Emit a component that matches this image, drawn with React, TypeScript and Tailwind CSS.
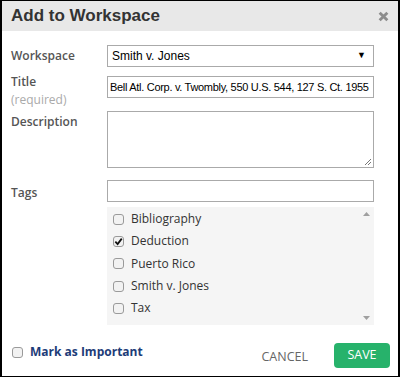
const tags = [
  { name: "Bibliography", checked: false },
  { name: "Deduction", checked: true },
  { name: "Puerto Rico", checked: false },
  { name: "Smith v. Jones", checked: false },
  { name: "Tax", checked: false },
];

const Box = ({ checked }: { checked?: boolean }) => (
  <span className="flex h-[11px] w-[11px] items-center justify-center rounded-[3px] border border-[#9a9a9a] bg-[#f2f2f2]">
    {checked && (
      <svg width="9" height="9" viewBox="0 0 10 10">
        <path d="M1.5 5.2 L4 7.8 L8.6 1.8" fill="none" stroke="#111" strokeWidth="2" />
      </svg>
    )}
  </span>
);

const Label = ({ children }: { children: React.ReactNode }) => (
  <div className="w-[96px] shrink-0 text-[12px] font-semibold text-[#555]">{children}</div>
);

export default function App() {
  return (
    <div className="h-[378px] w-[400px] bg-white font-['Open_Sans',sans-serif]">
      <div className="flex h-[377px] flex-col border-x-2 border-y border-black">
        <div className="flex h-[30px] shrink-0 items-center justify-between bg-[#e8e8e8] pl-[9px] pr-[9px]">
          <span className="font-['Liberation_Sans',Arial,sans-serif] text-[17px] font-bold text-[#333]">
            Add to Workspace
          </span>
          <svg width="11" height="11" viewBox="0 0 10 10">
            <path d="M1.5 1.5 L8.5 8.5 M8.5 1.5 L1.5 8.5" stroke="#8c8c8c" strokeWidth="2.6" />
          </svg>
        </div>

        <div className="flex flex-col pl-[9px] pr-[24px] pt-[14px]">
          <div className="flex items-center">
            <Label>Workspace</Label>
            <div className="flex h-[22px] flex-1 items-center justify-between border border-[#aaa] pl-[4px] pr-[7px] font-['Liberation_Sans',Arial,sans-serif] text-[12px] text-black">
              <span>Smith v. Jones</span>
              <span className="text-[9px]">▼</span>
            </div>
          </div>

          <div className="mt-[9px] flex h-[22px]">
            <div className="-mt-[3px] w-[96px] shrink-0 leading-[18px]">
              <div className="text-[12px] font-semibold text-[#555]">Title</div>
              <div className="text-[12px] text-[#aaa]">(required)</div>
            </div>
            <div className="flex h-[22px] flex-1 items-center overflow-hidden whitespace-nowrap border border-[#aaa] pl-[2px] font-['Liberation_Sans',Arial,sans-serif] text-[11px] tracking-[-0.3px] text-black">
              Bell Atl. Corp. v. Twombly, 550 U.S. 544, 127 S. Ct. 1955
            </div>
          </div>

          <div className="mt-[13px] flex">
            <div className="w-[96px] shrink-0 pt-[2px] text-[12px] font-semibold text-[#555]">Description</div>
            <div className="relative h-[57px] flex-1 border border-[#aaa]">
              <svg className="absolute bottom-[1px] right-[1px]" width="8" height="8" viewBox="0 0 8 8">
                <path d="M7 1 L1 7 M7 4 L4 7" stroke="#777" strokeWidth="1" />
              </svg>
            </div>
          </div>

          <div className="mt-[12px] flex items-center">
            <Label>
              <span className="relative top-[2px]">Tags</span>
            </Label>
            <div className="h-[22px] flex-1 border border-[#aaa]" />
          </div>

          <div className="mt-[5px] flex">
            <div className="w-[96px] shrink-0" />
            <div className="flex h-[118px] flex-1 bg-[#f5f5f5]">
              <div className="flex flex-1 flex-col pl-[6px] pt-[1px]">
                {tags.map((t) => (
                  <div key={t.name} className="flex h-[22.3px] items-center gap-[7px]">
                    <Box checked={t.checked} />
                    <span className="text-[12px] text-[#333]">{t.name}</span>
                  </div>
                ))}
              </div>
              <div className="flex w-[16px] flex-col items-center justify-between py-[5px]">
                <svg width="7" height="4" viewBox="0 0 7 4">
                  <path d="M0 4 L3.5 0 L7 4 Z" fill="#a0a0a0" />
                </svg>
                <svg width="7" height="4" viewBox="0 0 7 4">
                  <path d="M0 0 L3.5 4 L7 0 Z" fill="#a0a0a0" />
                </svg>
              </div>
            </div>
          </div>
        </div>

        <div className="mt-[18px] flex items-start pl-[10px] pr-[8px]">
          <div className="flex items-center gap-[7px]">
            <Box />
            <span className="text-[12px] font-bold text-[#1d3c78]">Mark as Important</span>
          </div>
          <div className="ml-auto flex items-center">
            <span className="mr-[26px] mt-[3px] text-[12.5px] text-[#666]">CANCEL</span>
            <div className="flex h-[25px] w-[56px] items-center justify-center rounded-[4px] bg-[#27b26b] text-[12.5px] text-white">
              SAVE
            </div>
          </div>
        </div>
      </div>
    </div>
  );
}
